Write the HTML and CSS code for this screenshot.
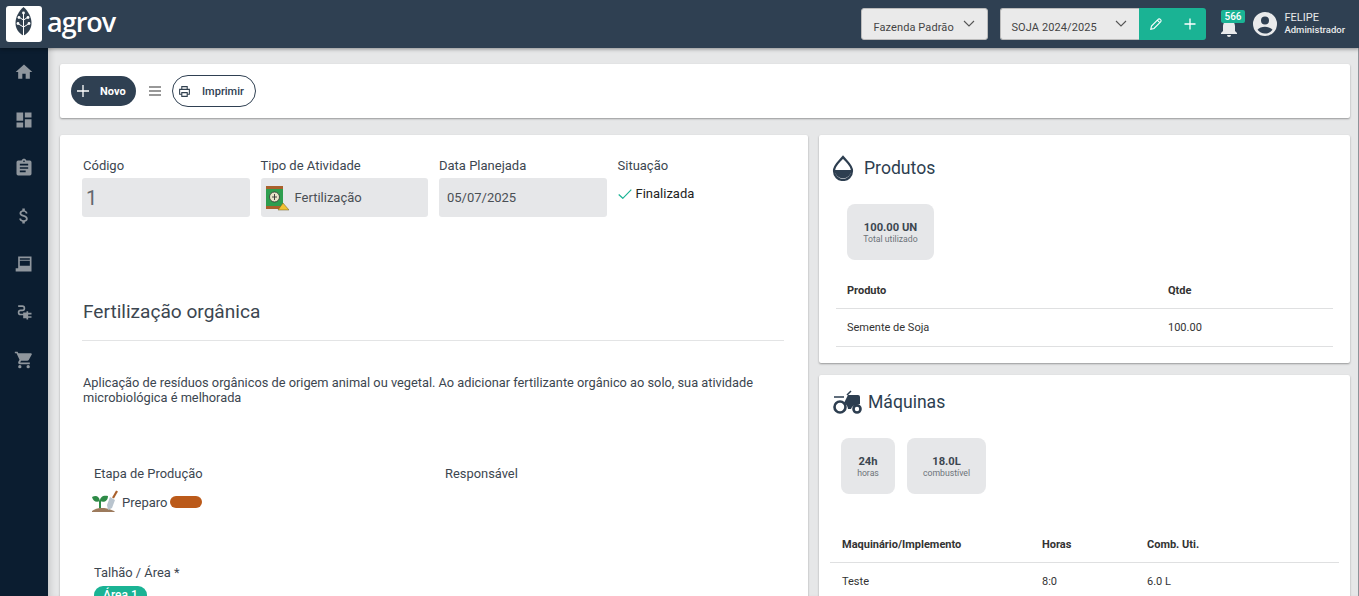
FILE: index.html
```html
<!DOCTYPE html>
<html lang="pt-BR">
<head>
    <meta charset="UTF-8">
    <title>Agrov</title>
    <link rel="stylesheet" href="styles.css">
</head>
<body>
    <header class="topbar">
        <div class="logo-box">
            <svg viewBox="0 0 36 36" width="36" height="36">
                <path d="M17.500 1C13 5 9.500 11 9.500 17c0 6 3.500 10.500 8 12.500 4.500-2 8-6.500 8-12.500 0-6-3.500-12-8-16z" fill="#31404f"/>
                <path d="M17.500 7v28M17.500 14l-4-2.500M17.500 14l4-2.500M17.500 21l-5-3M17.500 21l5-3" stroke="#fff" stroke-width="1" fill="none"/>
                <circle cx="17.500" cy="7" r="1.400" fill="#fff"/><circle cx="13" cy="11.500" r="1.400" fill="#fff"/><circle cx="22" cy="11.500" r="1.400" fill="#fff"/><circle cx="12" cy="17.500" r="1.400" fill="#fff"/><circle cx="23" cy="17.500" r="1.400" fill="#fff"/>
            </svg>
        </div>
        <span class="brand">agrov</span>
        <div class="topbar-right">
            <div class="select farm">Fazenda Padrão
                <svg class="chev" viewBox="0 0 12 7" width="12" height="7"><path d="M1 1l5 5 5-5" fill="none" stroke="#555" stroke-width="1.100"/></svg>
            </div>
            <div class="harvest-group">
                <div class="select harvest">SOJA 2024/2025
                    <svg class="chev" viewBox="0 0 12 7" width="12" height="7"><path d="M1 1l5 5 5-5" fill="none" stroke="#555" stroke-width="1.100"/></svg>
                </div>
                <div class="harvest-btn">
                    <svg viewBox="0 0 14 14" width="14" height="14"><path d="M1.800 12.200l.7-3.200 6.600-6.600a1.500 1.500 0 0 1 2.200 0l.3.3a1.500 1.500 0 0 1 0 2.200l-6.600 6.600zM8.300 3.200l2.500 2.500" fill="none" stroke="#fff" stroke-width="1.100"/></svg>
                </div>
                <div class="harvest-btn">
                    <svg viewBox="0 0 12 12" width="12" height="12"><path d="M6 .5v11M.5 6h11" stroke="#fff" stroke-width="1.300"/></svg>
                </div>
            </div>
            <div class="bell">
                <svg viewBox="0 0 18 18" width="18" height="18"><path d="M9 1a6 6 0 0 0-6 6v5l-2 2v1h16v-1l-2-2V7a6 6 0 0 0-6-6zM7 16h4a2 2 0 0 1-4 0z" fill="#e9eaeb"/></svg>
                <span class="badge">566</span>
            </div>
            <svg class="avatar" viewBox="0 0 24 24" width="24" height="24"><path d="M12 0a12 12 0 1 0 0 24 12 12 0 0 0 0-24zm0 4.500a4 4 0 1 1 0 8 4 4 0 0 1 0-8zm0 17a9.500 9.500 0 0 1-7.500-3.700c1.500-2 4.500-3.100 7.500-3.100s6 1.100 7.500 3.100A9.500 9.500 0 0 1 12 21.500z" fill="#e9eaeb"/></svg>
            <div class="user">
                <div class="user-name">FELIPE</div>
                <div class="user-role">Administrador</div>
            </div>
        </div>
    </header>

    <div class="shell">
        <nav class="sidebar">
            <svg viewBox="0 0 24 24" width="20" height="20"><path d="M10 20v-6h4v6h5v-8h3L12 3 2 12h3v8z"/></svg>
            <svg viewBox="0 0 24 24" width="20" height="20"><path d="M3 13h8V3H3zm0 8h8v-6H3zm10 0h8V11h-8zm0-18v6h8V3z"/></svg>
            <svg viewBox="0 0 24 24" width="20" height="20"><path d="M19 3h-4.200C14.400 1.800 13.300 1 12 1s-2.400.8-2.800 2H5a2 2 0 0 0-2 2v14a2 2 0 0 0 2 2h14a2 2 0 0 0 2-2V5a2 2 0 0 0-2-2zm-7 0a1 1 0 1 1 0 2 1 1 0 0 1 0-2zm2 14H7v-2h7zm3-4H7v-2h10zm0-4H7V7h10z"/></svg>
            <svg viewBox="0 0 24 24" width="20" height="20"><path d="M11.800 10.900c-2.300-.6-3-1.200-3-2.100 0-1.100 1-1.800 2.700-1.800 1.800 0 2.400.8 2.500 2.100h2.200c-.1-1.700-1.100-3.200-3.200-3.700V3h-3v2.200C8.100 5.600 6.600 6.900 6.600 8.800c0 2.300 1.900 3.400 4.700 4.100 2.500.6 3 1.500 3 2.400 0 .7-.5 1.700-2.700 1.700-2.100 0-2.900-.9-3-2.100H6.300c.1 2.200 1.800 3.500 3.700 3.900V21h3v-2.100c1.900-.4 3.500-1.500 3.500-3.600 0-2.800-2.400-3.800-4.700-4.400z"/></svg>
            <svg viewBox="0 0 24 24" width="20" height="20"><path d="M5 3h16v18H2v-4h3zm2 2v2h12V5zm0 3v6h12V8z" fill-rule="evenodd"/></svg>
            <svg viewBox="0 0 24 24" width="20" height="20"><path d="M5 4h5a3.500 3.500 0 0 1 0 7H8a1.500 1.500 0 0 0 0 3h3v-1.500h4V11h2v2h4v2h-4v2h4v2h-4v2h-2v-1.500h-4V16H8a3.500 3.500 0 0 1 0-7h2a1.500 1.500 0 0 0 0-3H5z"/></svg>
            <svg viewBox="0 0 24 24" width="20" height="20"><path d="M7 18a2 2 0 1 0 0 4 2 2 0 0 0 0-4zM1 2v2h2l3.600 7.600-1.400 2.400c-.7 1.400.3 3 1.800 3h12v-2H7.400l1.100-2h7.400c.8 0 1.400-.4 1.800-1l3.600-6.500A1 1 0 0 0 20.400 4H5.200l-.9-2zm16 16a2 2 0 1 0 0 4 2 2 0 0 0 0-4z"/></svg>
        </nav>

        <main class="content">
            <section class="card toolbar">
                <button class="btn-new">
                    <svg viewBox="0 0 12 12" width="12" height="12"><path d="M6 0v12M0 6h12" stroke="#fff" stroke-width="1.300"/></svg>
                    Novo
                </button>
                <svg class="menu-icon" viewBox="0 0 12 10" width="12" height="10"><path d="M0 1h12M0 5h12M0 9h12" stroke="#333" stroke-width="1.200"/></svg>
                <button class="btn-print">
                    <svg viewBox="0 0 24 24" width="13" height="13"><path d="M7 8V3h10v5M7 17H3V8h18v9h-4M7 14h10v7H7z" fill="none" stroke="#31404f" stroke-width="2"/></svg>
                    Imprimir
                </button>
            </section>

            <div class="columns">
                <section class="card details">
                    <div class="fields">
                        <div class="field field-code">
                            <label>Código</label>
                            <div class="field-box code">1</div>
                        </div>
                        <div class="field">
                            <label>Tipo de Atividade</label>
                            <div class="field-box">
                                <svg class="fert-icon" viewBox="0 0 24 26" width="24" height="26">
                                    <rect x="1" y="1" width="17" height="23" fill="#2e9e4f"/>
                                    <rect x="1" y="1" width="17" height="3" fill="#a9602c"/>
                                    <rect x="1" y="21" width="17" height="3" fill="#a9602c"/>
                                    <circle cx="9.500" cy="12" r="5" fill="#e8e4c8" stroke="#333" stroke-width=".8"/>
                                    <path d="M9.500 9v6M7 12h5" stroke="#333" stroke-width=".9"/>
                                    <path d="M13 25l5-7 6 7z" fill="#f1c232" stroke="#6b5a20" stroke-width=".5"/>
                                </svg>
                                Fertilização
                            </div>
                        </div>
                        <div class="field">
                            <label>Data Planejada</label>
                            <div class="field-box date">05/07/2025</div>
                        </div>
                        <div class="field status-field">
                            <label>Situação</label>
                            <div class="status">
                                <svg viewBox="0 0 14 10" width="14" height="10"><path d="M.7 5.500L4.800 9.300 13.300.7" fill="none" stroke="#1ab394" stroke-width="1.200"/></svg>
                                Finalizada
                            </div>
                        </div>
                    </div>

                    <h2 class="activity-title">Fertilização orgânica</h2>
                    <p class="activity-text">Aplicação de resíduos orgânicos de origem animal ou vegetal. Ao adicionar fertilizante orgânico ao solo, sua atividade microbiológica é melhorada</p>

                    <div class="stage-row">
                        <div class="stage-col">
                            <div class="sub-label">Etapa de Produção</div>
                            <div class="stage">
                                <svg viewBox="0 0 28 24" width="28" height="24">
                                    <path d="M1 7c4-2 7-1 8 4-4 2-7 0-8-4zM9 11c0-4 3-6 8-5 0 5-4 7-8 5z" fill="#2e8b47"/>
                                    <path d="M9 11v7" stroke="#2e8b47" stroke-width="2"/>
                                    <path d="M1 21c5-4 14-4 22 0l1 1H1z" fill="#9c7a5c"/>
                                    <path d="M26 1l-4 7" stroke="#a9602c" stroke-width="2.200"/>
                                    <path d="M19 7l5 3-3 8-4 2-1-5z" fill="#b9c4ce"/>
                                </svg>
                                Preparo
                                <span class="stage-pill"></span>
                            </div>
                        </div>
                        <div class="stage-col">
                            <div class="sub-label">Responsável</div>
                        </div>
                    </div>

                    <div class="sub-label area-label">Talhão / Área *</div>
                    <span class="area-pill">Área 1</span>
                </section>

                <div class="side">
                    <section class="card products">
                        <h3 class="card-title">
                            <svg viewBox="0 0 22 26" width="22" height="26"><path d="M11 2C7 7 2 10 2 16a9 9 0 0 0 18 0C20 10 15 7 11 2z" fill="none" stroke="#2d3e50" stroke-width="2.200"/><path d="M2.500 15h17a8.500 8.500 0 0 1-17 0z" fill="#2d3e50"/></svg>
                            Produtos
                        </h3>
                        <div class="stats stats-products">
                            <div class="stat total">
                                <strong>100.00 UN</strong>
                                <span>Total utilizado</span>
                            </div>
                        </div>
                        <table class="list list-products">
                            <tr><th class="col-prod">Produto</th><th>Qtde</th></tr>
                            <tr><td>Semente de Soja</td><td>100.00</td></tr>
                        </table>
                    </section>

                    <section class="card machines">
                        <h3 class="card-title">
                            <svg viewBox="0 0 31 24" width="31" height="24">
                                <path d="M12 13l4-8h10a2 2 0 0 1 2 2v7l-3 1a6 6 0 0 0-6 4h-3a8 8 0 0 0-4-6z" fill="#2d3e50"/>
                                <path d="M15 5l4-4M2 7h10" stroke="#2d3e50" stroke-width="1.500" fill="none"/>
                                <circle cx="8" cy="17" r="5.500" fill="none" stroke="#2d3e50" stroke-width="2.600"/>
                                <circle cx="25" cy="19" r="3.500" fill="none" stroke="#2d3e50" stroke-width="2.600"/>
                            </svg>
                            Máquinas
                        </h3>
                        <div class="stats stats-machines">
                            <div class="stat hours">
                                <strong>24h</strong>
                                <span>horas</span>
                            </div>
                            <div class="stat fuel">
                                <strong>18.0L</strong>
                                <span>combustível</span>
                            </div>
                        </div>
                        <table class="list list-machines">
                            <tr><th class="col-mach">Maquinário/Implemento</th><th class="col-hours">Horas</th><th>Comb. Uti.</th></tr>
                            <tr><td>Teste</td><td>8:0</td><td>6.0 L</td></tr>
                        </table>
                    </section>
                </div>
            </div>
        </main>
    </div>
</body>
</html>
```

FILE: styles.css
```css
* {
    box-sizing: border-box;
}
body {
    margin: 0;
    height: 596px;
    overflow: hidden;
    font-family: Roboto, sans-serif;
    color: #3c4650;
    background: #e6e7e8;
}
.topbar {
    position: relative;
    z-index: 2;
    display: flex;
    align-items: center;
    height: 48px;
    padding-left: 6px;
    background: #2f4052;
    box-shadow: 0 1px 4px rgba(0, 0, 0, 0.4);
}
.logo-box {
    width: 36px;
    height: 36px;
    background: #fff;
    border-radius: 3px;
}
.brand {
    margin-left: 5px;
    margin-top: -6px;
    font-family: "Open Sans", sans-serif;
    font-size: 27px;
    font-weight: 600;
    letter-spacing: -1px;
    color: #fff;
}
.topbar-right {
    display: flex;
    align-items: center;
    margin-left: auto;
    padding-right: 14px;
}
.select {
    display: flex;
    align-items: center;
    height: 32px;
    padding-top: 7px;
    font-size: 11px;
    letter-spacing: 0.1px;
    white-space: nowrap;
    color: #444;
    background: #eaeaea;
    border: 1px solid #bbb;
    border-radius: 3px;
}
.farm {
    width: 127px;
    padding-left: 11px;
    margin-right: 12px;
}
.harvest {
    width: 139px;
    padding-left: 10px;
    border-radius: 3px 0 0 3px;
    border-right: 0;
}
.chev {
    margin-left: auto;
    margin-right: 12px;
    margin-top: -9px;
}
.harvest-group {
    display: flex;
    margin-right: 14px;
}
.harvest-btn {
    display: flex;
    align-items: center;
    justify-content: center;
    width: 33.500px;
    height: 32px;
    background: #1ab394;
}
.harvest-btn:last-child {
    border-radius: 0 3px 3px 0;
}
.bell {
    position: relative;
    width: 22px;
    height: 26px;
    margin-right: 11px;
    padding-top: 8px;
}
.badge {
    position: absolute;
    top: -1px;
    left: 1px;
    padding: 0 3px;
    font-size: 10px;
    font-weight: 500;
    line-height: 13px;
    color: #fff;
    background: #1ab394;
    border-radius: 2px;
}
.avatar {
    margin-right: 7px;
}
.user {
    margin-top: -2px;
    color: #e9eaeb;
}
.user-name {
    font-size: 11px;
    line-height: 13px;
}
.user-role {
    font-size: 9.500px;
    font-weight: 500;
    line-height: 12px;
}
.shell {
    display: flex;
    height: 548px;
}
.sidebar {
    display: flex;
    flex-direction: column;
    align-items: center;
    flex: 0 0 48px;
    gap: 28px;
    padding-top: 14px;
    background: #0b1d30;
}
.sidebar svg {
    fill: #8f969d;
}
.content {
    flex: 1;
    padding: 16px 8px 0 12px;
    border-right: 1px solid #8e9399;
    box-shadow: inset 6px 0 6px -4px rgba(0, 0, 0, 0.15);
}
.card {
    background: #fff;
    border-radius: 2px;
    box-shadow: 0 1px 2px rgba(0, 0, 0, 0.35);
}
.toolbar {
    display: flex;
    align-items: center;
    height: 54px;
    padding-left: 11px;
}
.btn-new {
    display: flex;
    align-items: center;
    gap: 11px;
    width: 65px;
    height: 30px;
    padding: 0 0 0 6px;
    font: 700 11px Roboto, sans-serif;
    color: #fff;
    background: #2f4052;
    border: 0;
    border-radius: 15px;
}
.menu-icon {
    margin: 0 11px 0 13px;
}
.btn-print {
    display: flex;
    align-items: center;
    gap: 11px;
    width: 84px;
    height: 32px;
    padding: 0 0 0 5px;
    font: 500 11px Roboto, sans-serif;
    color: #2f4052;
    background: #fff;
    border: 1px solid #2f4052;
    border-radius: 16px;
}
.columns {
    display: flex;
    gap: 11px;
    margin-top: 17px;
}
.details {
    flex: 0 0 748px;
    height: 480px;
    padding: 22px 23px 0 22px;
}
.fields {
    display: flex;
    gap: 11px;
}
.field {
    flex: 0 0 167.500px;
}
.field label {
    display: block;
    height: 21px;
    font-size: 13px;
    line-height: 18px;
}
.field-code label {
    padding-left: 1px;
}
.field-box {
    display: flex;
    align-items: center;
    height: 39px;
    font-size: 13px;
    color: #4a4f55;
    background: #e6e7e9;
    border-radius: 3px;
    padding-left: 4px;
}
.code {
    padding-left: 4px;
    font-size: 20px;
    font-weight: 400;
    color: #63686d;
}
.date {
    padding-left: 8px;
}
.fert-icon {
    margin-right: 6px;
}
.status {
    display: flex;
    align-items: center;
    gap: 4px;
    padding-top: 8px;
    font-size: 13px;
    color: #222;
}
.activity-title {
    margin: 84px 1px 0 0;
    padding: 0 0 17px 1px;
    font-size: 19.100px;
    font-weight: 400;
    line-height: 22px;
    border-bottom: 1px solid #e3e4e5;
}
.activity-text {
    margin: 34px 1px 0 0;
    padding-left: 1px;
    font-size: 12.800px;
    line-height: 15px;
}
.stage-row {
    display: flex;
    margin-top: 60px;
    padding-left: 12px;
}
.stage-col {
    flex: 1;
}
.stage-col:first-child {
    flex: 0 0 351px;
}
.sub-label {
    font-size: 12.900px;
    line-height: 17px;
}
.stage {
    display: flex;
    align-items: center;
    margin: 8px 0 0 -3px;
    font-size: 13px;
}
.stage svg {
    margin-right: 3px;
}
.stage-pill {
    width: 32px;
    height: 12px;
    margin-left: 3px;
    background: #bb5a1a;
    border-radius: 6px;
}
.area-label {
    margin: 50px 0 0 12px;
}
.area-pill {
    display: inline-block;
    margin: 5px 0 0 12px;
    padding: 0 9px;
    font-size: 12px;
    font-weight: 500;
    line-height: 18px;
    color: #fff;
    background: #1ab394;
    border-radius: 9px;
}
.side {
    flex: 1;
    display: flex;
    flex-direction: column;
    gap: 12px;
}
.products {
    height: 228px;
    padding: 20px 17px 0;
}
.machines {
    height: 260px;
    padding: 15px 11px 0;
}
.card-title {
    display: flex;
    align-items: center;
    gap: 10px;
    margin: 0;
    font-size: 17.600px;
    font-weight: 400;
    color: #2d3e50;
}
.products .card-title {
    margin-left: -4px;
}
.machines .card-title {
    margin-left: 2px;
    gap: 5px;
}
.stats {
    display: flex;
    gap: 12px;
}
.stats-products {
    margin: 23px 0 0 11px;
}
.stats-machines {
    margin: 24px 0 0 11px;
}
.stat {
    display: flex;
    flex-direction: column;
    align-items: center;
    justify-content: center;
    height: 56px;
    padding-top: 2px;
    background: #e6e7e9;
    border-radius: 8px;
}
.stat strong {
    font-size: 11.200px;
    font-weight: 700;
    line-height: 13px;
}
.stat span {
    font-size: 8.700px;
    line-height: 11px;
    color: #6d7379;
}
.total {
    width: 87px;
}
.hours {
    width: 54px;
}
.fuel {
    width: 79px;
}
.list {
    width: 100%;
    border-collapse: collapse;
    font-size: 11px;
    color: #333;
}
.list th {
    height: 36px;
    padding: 2px 0 0 11px;
    font-weight: 700;
    text-align: left;
    border-bottom: 1px solid #dfe0e1;
}
.list td {
    height: 38px;
    padding: 0 0 0 11px;
    border-bottom: 1px solid #dfe0e1;
}
.list-machines th:first-child,
.list-machines td:first-child {
    padding-left: 12px;
}
.list-products {
    margin-top: 12px;
}
.list-machines {
    margin-top: 32px;
}
.col-prod {
    width: 321px;
}
.col-mach {
    width: 201px;
}
.col-hours {
    width: 105px;
}
```
